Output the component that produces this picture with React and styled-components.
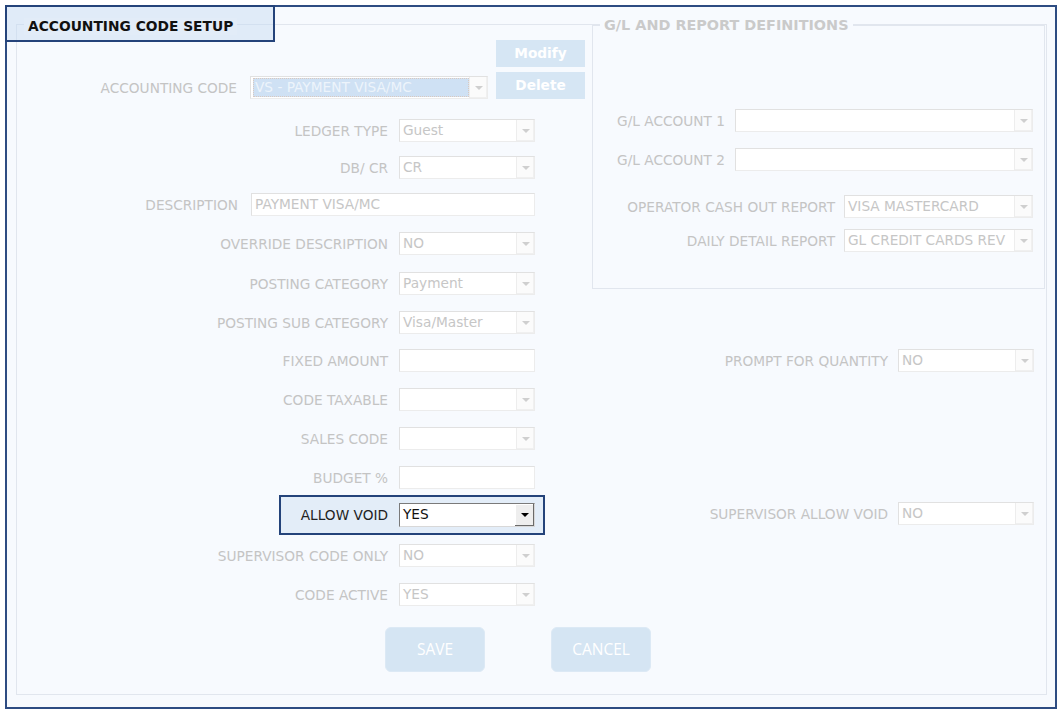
import React from 'react';
import styled, { createGlobalStyle } from 'styled-components';

const GlobalStyle = createGlobalStyle`
  html, body {
    margin: 0;
    padding: 0;
    background: #fff;
  }
  body {
    font-family: "DejaVu Sans", Verdana, sans-serif;
  }
`;

const Frame = styled.div`
  position: relative;
  box-sizing: border-box;
  width: 1052px;
  height: 704px;
  margin: 5px 0 0 5px;
  padding: 17px 8px 0 9px;
  border: 2px solid #2d4c82;
  background: #f7fafe;
`;

// annotation box drawn over the title
const TitleMark = styled.div`
  position: absolute;
  top: -2px;
  left: -2px;
  width: 270px;
  height: 37px;
  box-sizing: border-box;
  border: 2px solid #24437a;
  background: rgba(196, 218, 242, 0.45);
  pointer-events: none;
  z-index: 2;
`;

const Fieldset = styled.div`
  position: relative;
  box-sizing: border-box;
  height: 671px;
  border: 1px solid #e1e6ee;
`;

const Legend = styled.div`
  position: absolute;
  top: ${p => p.$top}px;
  left: 7px;
  padding: 0 4px;
  background: ${p => p.$bg || '#f7fafe'};
  font-weight: bold;
  font-size: ${p => p.$size || 13.8}px;
  line-height: 17px;
  color: ${p => (p.$muted ? '#cacaca' : '#111')};
  white-space: nowrap;
  z-index: 3;
`;

const Body = styled.div`
  display: grid;
  grid-template-columns: 575px 454px;
`;

const LeftCol = styled.div`
  display: flex;
  flex-direction: column;
  padding-top: 15px;
`;

const CodeRow = styled.div`
  display: flex;
  align-items: flex-end;
`;

const SmallButtons = styled.div`
  display: flex;
  flex-direction: column;
  gap: 5px;
  margin-left: 8px;
`;

const SmallButton = styled.div`
  width: 89px;
  height: 27px;
  background: #d6e6f4;
  color: #fff;
  font-weight: bold;
  font-size: 13.7px;
  line-height: 27px;
  text-align: center;
`;

const Row = styled.div`
  display: flex;
  align-items: center;
  height: 23px;
  margin-top: ${p => p.$mt}px;
`;

const MarkedRow = styled(Row)`
  box-sizing: border-box;
  width: 266px;
  height: 40px;
  margin-left: 262px;
  padding-right: 8px;
  border: 2px solid #24437a;
  background: #e3edf8;
`;

const Label = styled.div`
  flex: none;
  width: ${p => (p.$w ? `${p.$w}px` : 'auto')};
  margin-right: ${p => p.$gap ?? 11}px;
  text-align: right;
  font-size: 13.7px;
  line-height: 22px;
  color: ${p => (p.$dark ? '#222' : '#c4c4c4')};
  white-space: nowrap;
`;

const SelectBox = styled.div`
  display: flex;
  flex: none;
  box-sizing: border-box;
  width: ${p => p.$w}px;
  height: ${p => p.$h || 23}px;
  background: #fff;
  border: 1px solid;
  border-color: ${p =>
    p.$active ? '#7a7a7a #d8d8d8 #d8d8d8 #7a7a7a' : '#e1e1e1 #ececec #ececec #e1e1e1'};
`;

const Value = styled.div`
  flex: 1;
  min-width: 0;
  padding-left: 3px;
  font-size: 13.7px;
  line-height: 21px;
  color: ${p => (p.$active ? '#111' : '#c6c6c6')};
  white-space: nowrap;
  overflow: hidden;
`;

const Picked = styled.div`
  flex: 1;
  margin: 1px 0 1px 2px;
  padding-left: 1px;
  border: 1px dotted #d9c9c0;
  background: #cfe1f4;
  color: #edf4fb;
  font-size: 13.7px;
  line-height: 17px;
  white-space: nowrap;
`;

const Arrow = styled.div`
  flex: none;
  box-sizing: border-box;
  width: ${p => (p.$active ? 20 : 18)}px;
  display: flex;
  align-items: center;
  justify-content: center;
  background: ${p => (p.$active ? '#eeeeee' : '#fbfbfb')};
  border-left: 1px solid ${p => (p.$active ? '#ffffff' : '#ededed')};
  box-shadow: ${p =>
    p.$active ? 'inset -1px -1px 0 #6a6a6a, inset 1px 1px 0 #fff' : 'inset -1px -1px 0 #f0f0f0'};

  &::after {
    content: '';
    border-left: 4px solid transparent;
    border-right: 4px solid transparent;
    border-top: 4px solid ${p => (p.$active ? '#000' : '#cfcfcf')};
  }
`;

const RightCol = styled.div`
  display: flex;
  flex-direction: column;
  align-items: flex-end;
  padding-right: 12px;
`;

const SubFieldset = styled.div`
  position: relative;
  box-sizing: border-box;
  align-self: stretch;
  height: 264px;
  margin-right: -11px;
  padding-right: 11px;
  border: 1px solid #e1e6ee;
  display: flex;
  flex-direction: column;
  align-items: flex-end;
`;

const Actions = styled.div`
  display: flex;
  gap: 66px;
  margin-top: 21px;
  padding-left: 368px;
`;

const ActionButton = styled.div`
  box-sizing: border-box;
  width: 100px;
  height: 45px;
  border: 1px solid #dce9f5;
  border-radius: 6px;
  background: #d5e5f3;
  color: #fff;
  font-family: "Open Sans", "Liberation Sans", sans-serif;
  font-size: 15.5px;
  line-height: 43px;
  text-align: center;
`;

const Select = ({ w, value, active, h }) => (
  <SelectBox $w={w} $active={active} $h={h}>
    <Value $active={active}>{value}</Value>
    <Arrow $active={active} />
  </SelectBox>
);

const Input = ({ w, value }) => (
  <SelectBox $w={w}>
    <Value>{value}</Value>
  </SelectBox>
);

const leftRows = [
  { label: 'LEDGER TYPE', value: 'Guest', mt: 20 },
  { label: 'DB/ CR', value: 'CR', mt: 14 },
  { label: 'DESCRIPTION', value: 'PAYMENT VISA/MC', mt: 14, wide: true },
  { label: 'OVERRIDE DESCRIPTION', value: 'NO', mt: 16 },
  { label: 'POSTING CATEGORY', value: 'Payment', mt: 17 },
  { label: 'POSTING SUB CATEGORY', value: 'Visa/Master', mt: 16 },
  { label: 'FIXED AMOUNT', value: '', mt: 15, input: true },
  { label: 'CODE TAXABLE', value: '', mt: 16 },
  { label: 'SALES CODE', value: '', mt: 16 },
  { label: 'BUDGET %', value: '', mt: 16, input: true },
];

const App = () => {
  return (
    <>
      <GlobalStyle />
      <Frame>
        <TitleMark />
        <Fieldset>
          <Legend $top={-7} $bg="#e2ecf8">ACCOUNTING CODE SETUP</Legend>
          <Body>
            <LeftCol>
              <CodeRow>
                <Label $w={220} $gap={13}>ACCOUNTING CODE</Label>
                <SelectBox $w={238}>
                  <Picked>VS - PAYMENT VISA/MC</Picked>
                  <Arrow />
                </SelectBox>
                <SmallButtons>
                  <SmallButton>Modify</SmallButton>
                  <SmallButton>Delete</SmallButton>
                </SmallButtons>
              </CodeRow>

              {leftRows.map(r => (
                <Row key={r.label} $mt={r.mt}>
                  {r.wide ? (
                    <>
                      <Label $w={221} $gap={13}>{r.label}</Label>
                      <Input w={284} value={r.value} />
                    </>
                  ) : (
                    <>
                      <Label $w={371}>{r.label}</Label>
                      {r.input ? <Input w={136} value={r.value} /> : <Select w={136} value={r.value} />}
                    </>
                  )}
                </Row>
              ))}

              <MarkedRow $mt={6}>
                <Label $w={107} $dark>ALLOW VOID</Label>
                <Select w={136} h={24} value="YES" active />
              </MarkedRow>

              <Row $mt={9}>
                <Label $w={371}>SUPERVISOR CODE ONLY</Label>
                <Select w={136} value="NO" />
              </Row>
              <Row $mt={16}>
                <Label $w={371}>CODE ACTIVE</Label>
                <Select w={136} value="YES" />
              </Row>
            </LeftCol>

            <RightCol>
              <SubFieldset>
                <Legend $top={-9} $size={14.4} $muted>G/L AND REPORT DEFINITIONS</Legend>
                <Row $mt={83}>
                  <Label $gap={10}>G/L ACCOUNT 1</Label>
                  <Select w={298} value="" />
                </Row>
                <Row $mt={16}>
                  <Label $gap={10}>G/L ACCOUNT 2</Label>
                  <Select w={298} value="" />
                </Row>
                <Row $mt={24}>
                  <Label $gap={9}>OPERATOR CASH OUT REPORT</Label>
                  <Select w={189} value="VISA MASTERCARD" />
                </Row>
                <Row $mt={11}>
                  <Label $gap={9}>DAILY DETAIL REPORT</Label>
                  <Select w={189} value="GL CREDIT CARDS REV" />
                </Row>
              </SubFieldset>
              <Row $mt={60}>
                <Label $gap={10}>PROMPT FOR QUANTITY</Label>
                <Select w={136} value="NO" />
              </Row>
              <Row $mt={130}>
                <Label $gap={10}>SUPERVISOR ALLOW VOID</Label>
                <Select w={136} value="NO" />
              </Row>
            </RightCol>
          </Body>

          <Actions>
            <ActionButton>SAVE</ActionButton>
            <ActionButton>CANCEL</ActionButton>
          </Actions>
        </Fieldset>
      </Frame>
    </>
  );
};

export default App;
